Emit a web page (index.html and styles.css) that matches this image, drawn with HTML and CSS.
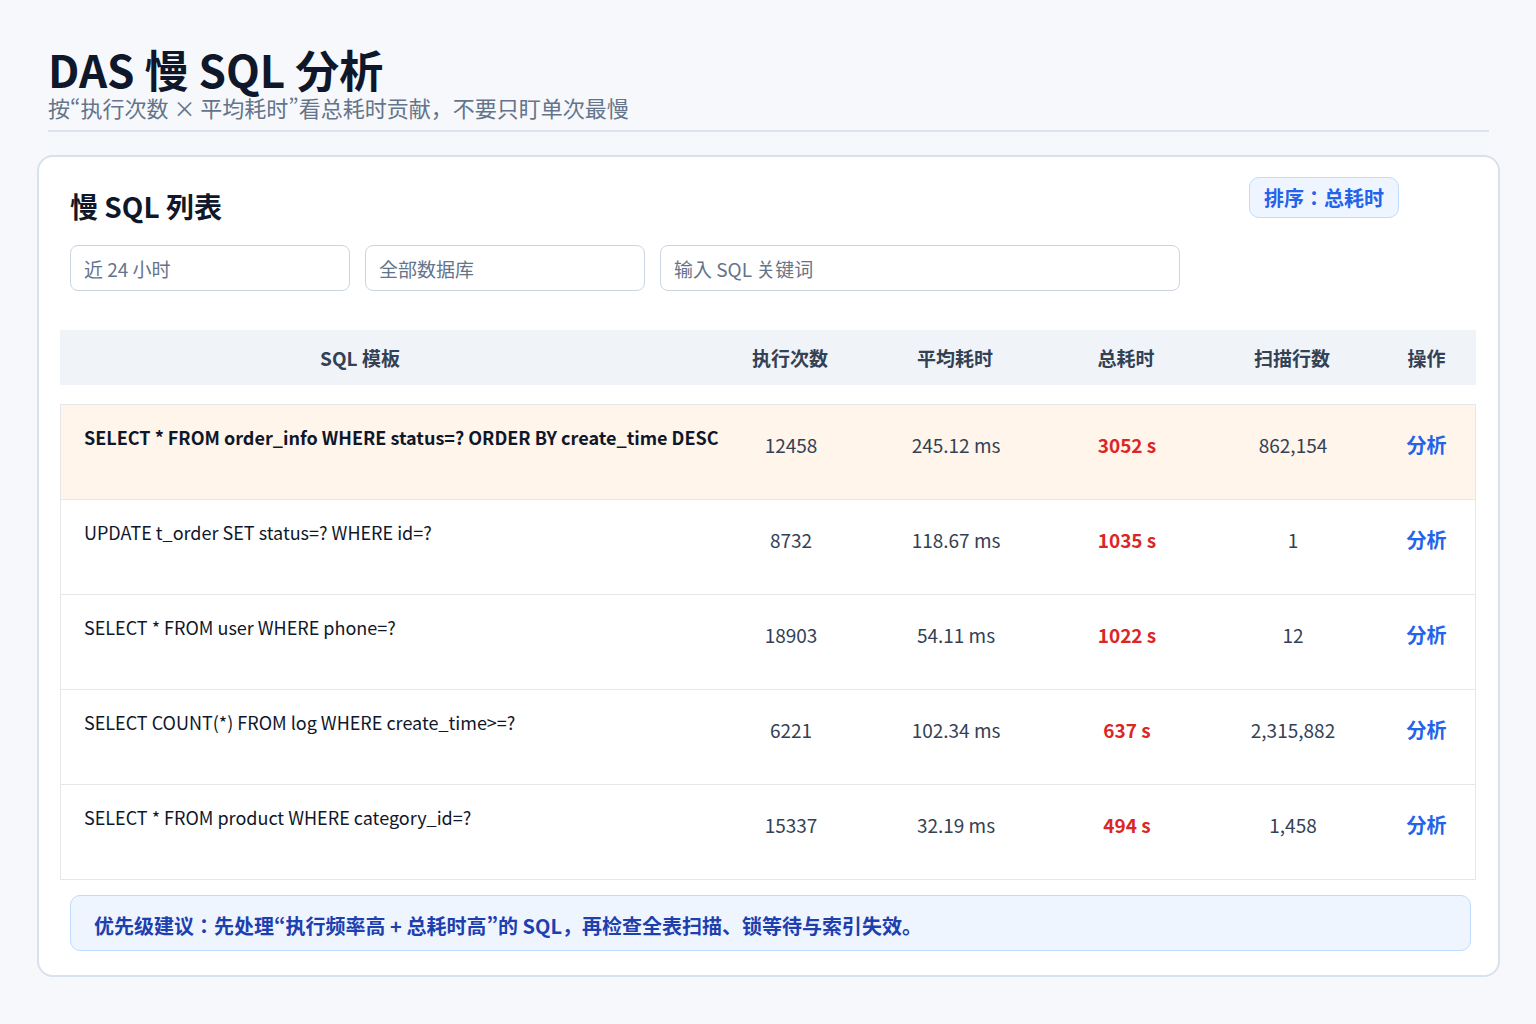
FILE: index.html
```html
<!DOCTYPE html>
<html lang="ja">
<head>
    <meta charset="UTF-8">
    <meta name="viewport" content="width=device-width, initial-scale=1.0">
    <title>DAS 慢 SQL 分析</title>
    <link rel="stylesheet" href="styles.css">
</head>
<body>
    <div class="page">
        <header class="page-header">
            <h1>DAS 慢 SQL 分析</h1>
            <p class="subtitle">按“执行次数 × 平均耗时”看总耗时贡献，不要只盯单次最慢</p>
        </header>

        <section class="card">
            <div class="card-top">
                <div class="card-left">
                    <h2>慢 SQL 列表</h2>
                    <div class="filters">
                        <input class="filter time" type="text" placeholder="近 24 小时">
                        <input class="filter db" type="text" placeholder="全部数据库">
                        <input class="filter keyword" type="text" placeholder="输入 SQL 关键词">
                    </div>
                </div>
                <span class="sort-badge">排序：总耗时</span>
            </div>

            <div class="table">
                <div class="thead">
                    <div class="col-sql">SQL 模板</div>
                    <div>执行次数</div>
                    <div>平均耗时</div>
                    <div>总耗时</div>
                    <div>扫描行数</div>
                    <div>操作</div>
                </div>
                <div class="tbody">
                    <div class="row hot">
                        <div class="col-sql">SELECT * FROM order_info WHERE status=? ORDER BY create_time DESC</div>
                        <div>12458</div>
                        <div>245.12 ms</div>
                        <div class="total">3052 s</div>
                        <div>862,154</div>
                        <div><a class="action" href="#">分析</a></div>
                    </div>
                    <div class="row">
                        <div class="col-sql">UPDATE t_order SET status=? WHERE id=?</div>
                        <div>8732</div>
                        <div>118.67 ms</div>
                        <div class="total">1035 s</div>
                        <div>1</div>
                        <div><a class="action" href="#">分析</a></div>
                    </div>
                    <div class="row">
                        <div class="col-sql">SELECT * FROM user WHERE phone=?</div>
                        <div>18903</div>
                        <div>54.11 ms</div>
                        <div class="total">1022 s</div>
                        <div>12</div>
                        <div><a class="action" href="#">分析</a></div>
                    </div>
                    <div class="row">
                        <div class="col-sql">SELECT COUNT(*) FROM log WHERE create_time&gt;=?</div>
                        <div>6221</div>
                        <div>102.34 ms</div>
                        <div class="total">637 s</div>
                        <div>2,315,882</div>
                        <div><a class="action" href="#">分析</a></div>
                    </div>
                    <div class="row">
                        <div class="col-sql">SELECT * FROM product WHERE category_id=?</div>
                        <div>15337</div>
                        <div>32.19 ms</div>
                        <div class="total">494 s</div>
                        <div>1,458</div>
                        <div><a class="action" href="#">分析</a></div>
                    </div>
                </div>
            </div>

            <div class="tip">优先级建议：先处理“执行频率高 + 总耗时高”的 SQL，再检查全表扫描、锁等待与索引失效。</div>
        </section>
    </div>
</body>
</html>
```

FILE: styles.css
```css
body {
    margin: 0;
    background-color: #f6f8fb;
    font-family: "Noto Sans CJK JP", "Noto Sans CJK SC", sans-serif;
    color: #0f172a;
}

.page {
    padding: 44px 36px 48px 37px;
}

.page-header {
    margin: 0 11px;
    padding-bottom: 10px;
    border-bottom: 2px solid #dde4ee;
}

h1 {
    margin: 0;
    font-size: 44px;
    font-weight: 700;
    line-height: 50px;
    color: #0f172a;
}

.subtitle {
    margin: 0;
    font-size: 22px;
    line-height: 26px;
    color: #64748b;
}

.card {
    margin-top: 23px;
    background-color: #fff;
    border: 2px solid #d8e1ec;
    border-radius: 16px;
    padding: 20px 22px 24px 21px;
}

.card-top {
    display: flex;
    justify-content: space-between;
    align-items: flex-start;
    padding: 0 77px 0 10px;
}

h2 {
    margin: 9px 0 0;
    font-size: 28px;
    font-weight: 700;
    line-height: 40px;
    color: #0f172a;
}

.filters {
    display: flex;
    gap: 15px;
    margin-top: 19px;
}

.filter {
    box-sizing: border-box;
    height: 46px;
    padding: 0 13px;
    border: 1px solid #cbd5e1;
    border-radius: 8px;
    font-family: inherit;
    font-size: 19px;
    color: #334155;
    background: #fff;
}

.filter::placeholder {
    color: #64748b;
}

.filter.time,
.filter.db {
    width: 280px;
}

.filter.keyword {
    width: 520px;
}

.sort-badge {
    margin-top: 0;
    padding: 5px 14px;
    font-size: 20px;
    font-weight: 700;
    line-height: 29px;
    color: #2563eb;
    background-color: #eef5ff;
    border: 1px solid #bfdbfe;
    border-radius: 10px;
}

.table {
    margin-top: 39px;
}

.thead,
.row {
    display: grid;
    grid-template-columns: 655px 150px 180px 162px 170px 1fr;
}

.thead {
    height: 55px;
    align-items: center;
    text-align: center;
    background-color: #f0f4f9;
    font-size: 19px;
    font-weight: 700;
    color: #334155;
}

.thead .col-sql {
    padding-right: 55px;
}

.tbody {
    margin-top: 19px;
    border: 1px solid #e5e7eb;
    border-bottom: none;
}

.row {
    height: 94px;
    border-bottom: 1px solid #e5e7eb;
    align-items: center;
    text-align: center;
    font-size: 19px;
    color: #334155;
}

.row > div {
    padding-bottom: 16px;
}

.row .col-sql {
    align-self: start;
    padding: 19px 0 0 23px;
    text-align: left;
    white-space: nowrap;
    font-size: 18px;
    color: #0f172a;
}

.row.hot {
    background-color: #fff5eb;
}

.row.hot .col-sql {
    font-weight: 700;
}

.total {
    font-weight: 700;
    color: #dc2626;
}

.action {
    font-size: 20px;
    font-weight: 700;
    color: #2563eb;
    text-decoration: none;
}

.tip {
    margin: 15px 5px 0 10px;
    padding: 15px 23px 9px;
    font-size: 20px;
    font-weight: 700;
    line-height: 30px;
    color: #1e40af;
    background-color: #eef5ff;
    border: 1px solid #bfdbfe;
    border-radius: 10px;
}
```
